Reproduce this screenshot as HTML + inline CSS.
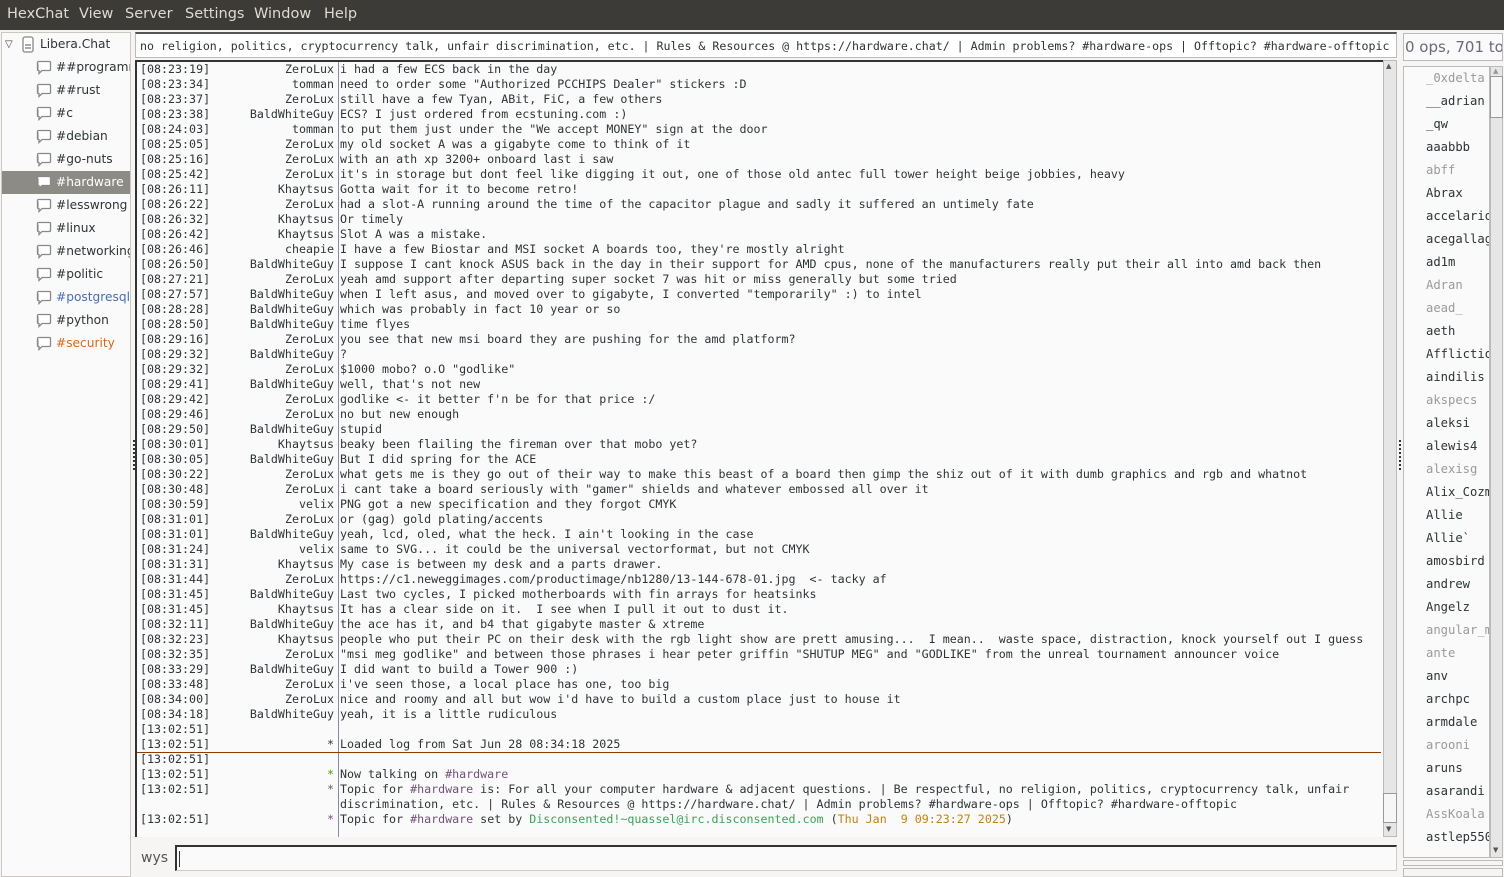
<!DOCTYPE html>
<html><head><meta charset="utf-8"><style>
*{margin:0;padding:0;box-sizing:border-box}
body{width:1504px;height:877px;background:#f6f5f4;position:relative;overflow:hidden;font-family:"DejaVu Sans",sans-serif}
#menu{position:absolute;left:0;top:0;width:1504px;height:30px;background:#3c3b37;color:#dfdbd2;font-size:14.5px}
#menu span{position:absolute;top:6px}
#tree{position:absolute;left:1px;top:32px;width:130px;height:845px;background:#fafafa;border:1px solid #cdc7c2;overflow:hidden}
.ti{position:absolute;left:0;width:128px;height:23px;font-size:12.2px;color:#2e3436;line-height:23px;white-space:nowrap;font-family:"DejaVu Sans",sans-serif}
.ti svg{position:absolute;left:34px;top:4px}
.ti .tx{position:absolute;left:54px}
#topic{position:absolute;left:135px;top:32px;width:1262px;height:26px;background:#fff;border:1px solid #bbb;border-top:2px solid #555;font-family:"DejaVu Sans Mono",monospace;font-size:11.6px;color:#2e3436;line-height:24px;padding-left:4px;white-space:nowrap;overflow:hidden}
#chat{position:absolute;left:135px;top:60px;width:1248px;height:777px;background:#fafafa;border-left:2px solid #333;border-top:2px solid #333;overflow:hidden;font-family:"DejaVu Sans Mono",monospace;font-size:11.65px;color:#2e3436}
#sep{position:absolute;left:201px;top:0;width:1px;height:777px;background:#8a8aa8}
.l{position:absolute;left:0;height:15px;line-height:15px;white-space:pre;width:1246px}
.t{position:absolute;left:3px}
.n{position:absolute;right:1049px;text-align:right}
.m{position:absolute;left:203px}
.p{color:#75507b}.g{color:#3ca15a}.o{color:#c4820b}.gs{color:#4e9a06}
#sb{position:absolute;left:1383px;top:60px;width:14px;height:777px;background:#e6e6e6;border:1px solid #bbb}
#sbt{position:absolute;left:1383px;top:793px;width:14px;height:30px;background:#f6f6f6;border:1px solid #999}
#ulh{position:absolute;left:1403px;top:33px;width:100px;height:28px;border:1px solid #bbb;background:#fafafa;color:#6a6a7a;font-size:15px;line-height:26px;white-space:nowrap;overflow:hidden;padding-left:1px}
#ul{position:absolute;left:1403px;top:66px;width:87px;height:792px;background:#fafafa;border:1px solid #bbb;overflow:hidden;font-family:"DejaVu Sans Mono",monospace;font-size:12.2px;color:#2e3436}
#ul div{position:absolute;left:22px;height:23px;line-height:23px;white-space:nowrap}
#ul .a{color:#9a9a9a}
#usb{position:absolute;left:1490px;top:66px;width:13px;height:792px;background:#e6e6e6;border:1px solid #bbb}
#usbt{position:absolute;left:1490px;top:76px;width:13px;height:42px;background:#f6f6f6;border:1px solid #999}
#inp{position:absolute;left:175px;top:845px;width:1222px;height:26px;background:#fafafa;border:1px solid #ccc;border-top:2px solid #333;border-left:2px solid #333}
</style></head><body>
<svg width="0" height="0" style="position:absolute"><defs><symbol id="b" viewBox="0 0 16 15"><path d="M3.5 1.5h10a1 1 0 0 1 1 1v7a1 1 0 0 1-1 1H6l-3 3v-3H2.5a1 1 0 0 1-1-1v-7a1 1 0 0 1 1-1z" fill="#fff" stroke="#888" stroke-width="1.3"/><path d="M2.5 3.5v6" stroke="#bbb"/></symbol></defs></svg>
<div id="menu"><span style="left:7px">HexChat</span><span style="left:79px">View</span><span style="left:125px">Server</span><span style="left:185px">Settings</span><span style="left:254px">Window</span><span style="left:324px">Help</span></div>
<div id="tree">
<div class="ti" style="top:0"><span style="position:absolute;left:3px;top:0;font-size:10px;color:#444">▽</span><svg style="position:absolute;left:20px;top:3px" width="12" height="17"><rect x="1" y="1" width="10" height="15" rx="2" fill="#fff" stroke="#888" stroke-width="1.3"/><rect x="3" y="8" width="6" height="2" fill="#aaa"/><rect x="3" y="11" width="6" height="2" fill="#aaa"/></svg><span style="position:absolute;left:38px">Libera.Chat</span></div>
<div class="ti" style="top:23px"><svg width="16" height="15"><use href="#b"/></svg><span class="tx">##programming</span></div>
<div class="ti" style="top:46px"><svg width="16" height="15"><use href="#b"/></svg><span class="tx">##rust</span></div>
<div class="ti" style="top:69px"><svg width="16" height="15"><use href="#b"/></svg><span class="tx">#c</span></div>
<div class="ti" style="top:92px"><svg width="16" height="15"><use href="#b"/></svg><span class="tx">#debian</span></div>
<div class="ti" style="top:115px"><svg width="16" height="15"><use href="#b"/></svg><span class="tx">#go-nuts</span></div>
<div class="ti" style="top:138px;background:#8d8b86;color:#fff"><svg width="16" height="15"><use href="#b"/></svg><span class="tx">#hardware</span></div>
<div class="ti" style="top:161px"><svg width="16" height="15"><use href="#b"/></svg><span class="tx">#lesswrong</span></div>
<div class="ti" style="top:184px"><svg width="16" height="15"><use href="#b"/></svg><span class="tx">#linux</span></div>
<div class="ti" style="top:207px"><svg width="16" height="15"><use href="#b"/></svg><span class="tx">#networking</span></div>
<div class="ti" style="top:230px"><svg width="16" height="15"><use href="#b"/></svg><span class="tx">#politic</span></div>
<div class="ti" style="top:253px;color:#4a6eb5"><svg width="16" height="15"><use href="#b"/></svg><span class="tx">#postgresql</span></div>
<div class="ti" style="top:276px"><svg width="16" height="15"><use href="#b"/></svg><span class="tx">#python</span></div>
<div class="ti" style="top:299px;color:#d8681a"><svg width="16" height="15"><use href="#b"/></svg><span class="tx">#security</span></div>
</div>
<div id="topic">no religion, politics, cryptocurrency talk, unfair discrimination, etc. | Rules &amp; Resources @ https://hardware.chat/ | Admin problems? #hardware-ops | Offtopic? #hardware-offtopic</div>
<div id="chat"><div id="sep"></div>
<div class="l" style="top:0"><span class="t">[08:23:19]</span><span class="n">ZeroLux</span><span class="m">i had a few ECS back in the day</span></div>
<div class="l" style="top:15px"><span class="t">[08:23:34]</span><span class="n">tomman</span><span class="m">need to order some "Authorized PCCHIPS Dealer" stickers :D</span></div>
<div class="l" style="top:30px"><span class="t">[08:23:37]</span><span class="n">ZeroLux</span><span class="m">still have a few Tyan, ABit, FiC, a few others</span></div>
<div class="l" style="top:45px"><span class="t">[08:23:38]</span><span class="n">BaldWhiteGuy</span><span class="m">ECS? I just ordered from ecstuning.com :)</span></div>
<div class="l" style="top:60px"><span class="t">[08:24:03]</span><span class="n">tomman</span><span class="m">to put them just under the "We accept MONEY" sign at the door</span></div>
<div class="l" style="top:75px"><span class="t">[08:25:05]</span><span class="n">ZeroLux</span><span class="m">my old socket A was a gigabyte come to think of it</span></div>
<div class="l" style="top:90px"><span class="t">[08:25:16]</span><span class="n">ZeroLux</span><span class="m">with an ath xp 3200+ onboard last i saw</span></div>
<div class="l" style="top:105px"><span class="t">[08:25:42]</span><span class="n">ZeroLux</span><span class="m">it's in storage but dont feel like digging it out, one of those old antec full tower height beige jobbies, heavy</span></div>
<div class="l" style="top:120px"><span class="t">[08:26:11]</span><span class="n">Khaytsus</span><span class="m">Gotta wait for it to become retro!</span></div>
<div class="l" style="top:135px"><span class="t">[08:26:22]</span><span class="n">ZeroLux</span><span class="m">had a slot-A running around the time of the capacitor plague and sadly it suffered an untimely fate</span></div>
<div class="l" style="top:150px"><span class="t">[08:26:32]</span><span class="n">Khaytsus</span><span class="m">Or timely</span></div>
<div class="l" style="top:165px"><span class="t">[08:26:42]</span><span class="n">Khaytsus</span><span class="m">Slot A was a mistake.</span></div>
<div class="l" style="top:180px"><span class="t">[08:26:46]</span><span class="n">cheapie</span><span class="m">I have a few Biostar and MSI socket A boards too, they're mostly alright</span></div>
<div class="l" style="top:195px"><span class="t">[08:26:50]</span><span class="n">BaldWhiteGuy</span><span class="m">I suppose I cant knock ASUS back in the day in their support for AMD cpus, none of the manufacturers really put their all into amd back then</span></div>
<div class="l" style="top:210px"><span class="t">[08:27:21]</span><span class="n">ZeroLux</span><span class="m">yeah amd support after departing super socket 7 was hit or miss generally but some tried</span></div>
<div class="l" style="top:225px"><span class="t">[08:27:57]</span><span class="n">BaldWhiteGuy</span><span class="m">when I left asus, and moved over to gigabyte, I converted "temporarily" :) to intel</span></div>
<div class="l" style="top:240px"><span class="t">[08:28:28]</span><span class="n">BaldWhiteGuy</span><span class="m">which was probably in fact 10 year or so</span></div>
<div class="l" style="top:255px"><span class="t">[08:28:50]</span><span class="n">BaldWhiteGuy</span><span class="m">time flyes</span></div>
<div class="l" style="top:270px"><span class="t">[08:29:16]</span><span class="n">ZeroLux</span><span class="m">you see that new msi board they are pushing for the amd platform?</span></div>
<div class="l" style="top:285px"><span class="t">[08:29:32]</span><span class="n">BaldWhiteGuy</span><span class="m">?</span></div>
<div class="l" style="top:300px"><span class="t">[08:29:32]</span><span class="n">ZeroLux</span><span class="m">$1000 mobo? o.O "godlike"</span></div>
<div class="l" style="top:315px"><span class="t">[08:29:41]</span><span class="n">BaldWhiteGuy</span><span class="m">well, that's not new</span></div>
<div class="l" style="top:330px"><span class="t">[08:29:42]</span><span class="n">ZeroLux</span><span class="m">godlike &lt;- it better f'n be for that price :/</span></div>
<div class="l" style="top:345px"><span class="t">[08:29:46]</span><span class="n">ZeroLux</span><span class="m">no but new enough</span></div>
<div class="l" style="top:360px"><span class="t">[08:29:50]</span><span class="n">BaldWhiteGuy</span><span class="m">stupid</span></div>
<div class="l" style="top:375px"><span class="t">[08:30:01]</span><span class="n">Khaytsus</span><span class="m">beaky been flailing the fireman over that mobo yet?</span></div>
<div class="l" style="top:390px"><span class="t">[08:30:05]</span><span class="n">BaldWhiteGuy</span><span class="m">But I did spring for the ACE</span></div>
<div class="l" style="top:405px"><span class="t">[08:30:22]</span><span class="n">ZeroLux</span><span class="m">what gets me is they go out of their way to make this beast of a board then gimp the shiz out of it with dumb graphics and rgb and whatnot</span></div>
<div class="l" style="top:420px"><span class="t">[08:30:48]</span><span class="n">ZeroLux</span><span class="m">i cant take a board seriously with "gamer" shields and whatever embossed all over it</span></div>
<div class="l" style="top:435px"><span class="t">[08:30:59]</span><span class="n">velix</span><span class="m">PNG got a new specification and they forgot CMYK</span></div>
<div class="l" style="top:450px"><span class="t">[08:31:01]</span><span class="n">ZeroLux</span><span class="m">or (gag) gold plating/accents</span></div>
<div class="l" style="top:465px"><span class="t">[08:31:01]</span><span class="n">BaldWhiteGuy</span><span class="m">yeah, lcd, oled, what the heck. I ain't looking in the case</span></div>
<div class="l" style="top:480px"><span class="t">[08:31:24]</span><span class="n">velix</span><span class="m">same to SVG... it could be the universal vectorformat, but not CMYK</span></div>
<div class="l" style="top:495px"><span class="t">[08:31:31]</span><span class="n">Khaytsus</span><span class="m">My case is between my desk and a parts drawer.</span></div>
<div class="l" style="top:510px"><span class="t">[08:31:44]</span><span class="n">ZeroLux</span><span class="m">https://c1.neweggimages.com/productimage/nb1280/13-144-678-01.jpg  &lt;- tacky af</span></div>
<div class="l" style="top:525px"><span class="t">[08:31:45]</span><span class="n">BaldWhiteGuy</span><span class="m">Last two cycles, I picked motherboards with fin arrays for heatsinks</span></div>
<div class="l" style="top:540px"><span class="t">[08:31:45]</span><span class="n">Khaytsus</span><span class="m">It has a clear side on it.  I see when I pull it out to dust it.</span></div>
<div class="l" style="top:555px"><span class="t">[08:32:11]</span><span class="n">BaldWhiteGuy</span><span class="m">the ace has it, and b4 that gigabyte master &amp; xtreme</span></div>
<div class="l" style="top:570px"><span class="t">[08:32:23]</span><span class="n">Khaytsus</span><span class="m">people who put their PC on their desk with the rgb light show are prett amusing...  I mean..  waste space, distraction, knock yourself out I guess</span></div>
<div class="l" style="top:585px"><span class="t">[08:32:35]</span><span class="n">ZeroLux</span><span class="m">"msi meg godlike" and between those phrases i hear peter griffin "SHUTUP MEG" and "GODLIKE" from the unreal tournament announcer voice</span></div>
<div class="l" style="top:600px"><span class="t">[08:33:29]</span><span class="n">BaldWhiteGuy</span><span class="m">I did want to build a Tower 900 :)</span></div>
<div class="l" style="top:615px"><span class="t">[08:33:48]</span><span class="n">ZeroLux</span><span class="m">i've seen those, a local place has one, too big</span></div>
<div class="l" style="top:630px"><span class="t">[08:34:00]</span><span class="n">ZeroLux</span><span class="m">nice and roomy and all but wow i'd have to build a custom place just to house it</span></div>
<div class="l" style="top:645px"><span class="t">[08:34:18]</span><span class="n">BaldWhiteGuy</span><span class="m">yeah, it is a little rudiculous</span></div>
<div class="l" style="top:660px"><span class="t">[13:02:51]</span></div>
<div class="l" style="top:675px"><span class="t">[13:02:51]</span><span class="n">*</span><span class="m">Loaded log from Sat Jun 28 08:34:18 2025</span></div>
<div style="position:absolute;left:0;top:690px;width:1244px;height:1px;background:#8f3b00"></div>
<div class="l" style="top:690px"><span class="t">[13:02:51]</span></div>
<div class="l" style="top:705px"><span class="t">[13:02:51]</span><span class="n gs">*</span><span class="m">Now talking on <span class="p">#hardware</span></span></div>
<div class="l" style="top:720px"><span class="t">[13:02:51]</span><span class="n p">*</span><span class="m">Topic for <span class="p">#hardware</span> is: For all your computer hardware &amp; adjacent questions. | Be respectful, no religion, politics, cryptocurrency talk, unfair</span></div>
<div class="l" style="top:735px"><span class="m">discrimination, etc. | Rules &amp; Resources @ https://hardware.chat/ | Admin problems? #hardware-ops | Offtopic? #hardware-offtopic</span></div>
<div class="l" style="top:750px"><span class="t">[13:02:51]</span><span class="n p">*</span><span class="m">Topic for <span class="p">#hardware</span> set by <span class="g">Disconsented!~quassel@irc.disconsented.com</span> (<span class="o">Thu Jan  9 09:23:27 2025</span>)</span></div>
</div>
<div id="sb"></div><div id="sbt"></div>
<div style="position:absolute;left:1386px;top:62px;font-size:7px;color:#555">▲</div>
<div style="position:absolute;left:1386px;top:825px;font-size:7px;color:#555">▼</div>
<div id="ulh">0 ops, 701 total</div>
<div id="ul">
<div class="a" style="top:0">_0xdelta</div><div style="top:23px">__adrian</div><div style="top:46px">_qw</div><div style="top:69px">aaabbb</div><div class="a" style="top:92px">abff</div><div style="top:115px">Abrax</div><div style="top:138px">accelarion</div><div style="top:161px">acegallagher</div><div style="top:184px">ad1m</div><div class="a" style="top:207px">Adran</div><div class="a" style="top:230px">aead_</div><div style="top:253px">aeth</div><div style="top:276px">Affliction</div><div style="top:299px">aindilis</div><div class="a" style="top:322px">akspecs</div><div style="top:345px">aleksi</div><div style="top:368px">alewis4</div><div class="a" style="top:391px">alexisg</div><div style="top:414px">Alix_Cozmo</div><div style="top:437px">Allie</div><div style="top:460px">Allie`</div><div style="top:483px">amosbird</div><div style="top:506px">andrew</div><div style="top:529px">Angelz</div><div class="a" style="top:552px">angular_mike</div><div class="a" style="top:575px">ante</div><div style="top:598px">anv</div><div style="top:621px">archpc</div><div style="top:644px">armdale</div><div class="a" style="top:667px">arooni</div><div style="top:690px">aruns</div><div style="top:713px">asarandi</div><div class="a" style="top:736px">AssKoala</div><div style="top:759px">astlep5505</div>
</div>
<div id="usb"></div><div id="usbt"></div>
<div style="position:absolute;left:1493px;top:67px;font-size:7px;color:#999">▲</div>
<div style="position:absolute;left:1493px;top:846px;font-size:7px;color:#555">▼</div>
<div style="position:absolute;left:1403px;top:860px;width:100px;height:6px;border:1px solid #bbb"></div>
<div style="position:absolute;left:1403px;top:868px;width:100px;height:9px;border:1px solid #bbb"></div>
<div style="position:absolute;left:133px;top:440px;width:2px;height:30px;border-left:2px dotted #333"></div>
<div style="position:absolute;left:1399px;top:440px;width:2px;height:30px;border-left:2px dotted #333"></div>
<div style="position:absolute;left:141px;top:850px;font-size:14px;color:#555">wys</div>
<div id="inp"><div style="position:absolute;left:2px;top:4px;width:1px;height:16px;background:#333"></div></div>
</body></html>
